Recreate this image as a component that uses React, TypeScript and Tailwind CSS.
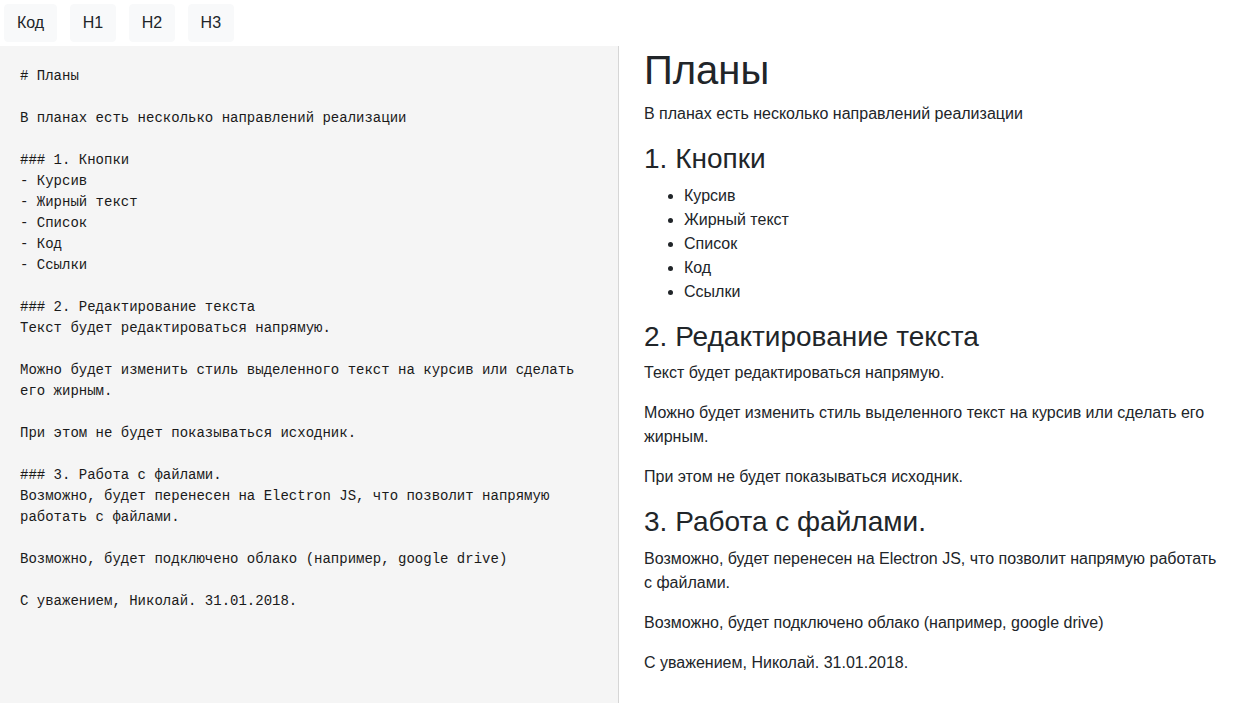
import { useState } from 'react'

const INITIAL_TEXT = `# Планы

В планах есть несколько направлений реализации

### 1. Кнопки
- Курсив
- Жирный текст
- Список
- Код
- Ссылки

### 2. Редактирование текста
Текст будет редактироваться напрямую.

Можно будет изменить стиль выделенного текст на курсив или сделать его жирным.

При этом не будет показываться исходник.

### 3. Работа с файлами.
Возможно, будет перенесен на Electron JS, что позволит напрямую работать с файлами.

Возможно, будет подключено облако (например, google drive)

С уважением, Николай. 31.01.2018.`

type Block =
  | { kind: 'h1' | 'h2' | 'h3' | 'p'; text: string }
  | { kind: 'ul'; items: string[] }

// very small markdown parser, enough for headings, lists and paragraphs
function parse(src: string): Block[] {
  const blocks: Block[] = []
  let para: string[] = []
  let list: string[] = []

  const flush = () => {
    if (para.length) blocks.push({ kind: 'p', text: para.join(' ') })
    if (list.length) blocks.push({ kind: 'ul', items: list })
    para = []
    list = []
  }

  for (const raw of src.split('\n')) {
    const line = raw.trim()
    if (!line) {
      flush()
      continue
    }
    const h = line.match(/^(#{1,3})\s+(.*)$/)
    if (h) {
      flush()
      const kind = (['h1', 'h2', 'h3'] as const)[h[1].length - 1]
      blocks.push({ kind, text: h[2] })
      continue
    }
    if (line.startsWith('- ')) {
      if (para.length) {
        blocks.push({ kind: 'p', text: para.join(' ') })
        para = []
      }
      list.push(line.slice(2))
      continue
    }
    if (list.length) {
      blocks.push({ kind: 'ul', items: list })
      list = []
    }
    para.push(line)
  }
  flush()
  return blocks
}

const TOOLS = [
  { label: 'Код', prefix: '`' },
  { label: 'H1', prefix: '# ' },
  { label: 'H2', prefix: '## ' },
  { label: 'H3', prefix: '### ' },
]

export default function App() {
  const [text, setText] = useState(INITIAL_TEXT)

  const insert = (prefix: string) => setText(prev => prev + '\n\n' + prefix)

  return (
    <div className="flex h-screen flex-col bg-white font-['Liberation_Sans',Arial,sans-serif] text-[#212529]">
      {/* Toolbar */}
      <div className="flex h-[46px] shrink-0 items-start gap-[12.5px] p-1">
        {TOOLS.map(t => (
          <button
            key={t.label}
            onClick={() => insert(t.prefix)}
            className="rounded border border-[#f8f9fa] bg-[#f8f9fa] px-3 py-1.5 text-base leading-6 text-[#212529] hover:bg-[#e2e6ea]"
          >
            {t.label}
          </button>
        ))}
      </div>

      {/* Editor + preview */}
      <div className="flex min-h-0 flex-1">
        <div className="w-[619px] shrink-0 border-r border-[#d6d6d6] bg-[#f5f5f5]">
          <textarea
            value={text}
            onChange={e => setText(e.target.value)}
            spellCheck={false}
            className="block h-full w-full resize-none bg-transparent p-5 font-['Liberation_Mono','Courier_New',monospace] text-[14px] leading-[21px] text-[#1a1a1a] outline-none"
          />
        </div>

        <div className="min-w-0 flex-1 overflow-hidden pl-[25px] pr-[25px]">
          {parse(text).map((b, i) => {
            if (b.kind === 'h1')
              return <h1 key={i} className="mb-2 text-[40px] font-medium leading-[1.2]">{b.text}</h1>
            if (b.kind === 'h2')
              return <h2 key={i} className="mb-2 text-[32px] font-medium leading-[1.2]">{b.text}</h2>
            if (b.kind === 'h3')
              return <h3 key={i} className="mb-2 text-[28px] font-medium leading-[1.2]">{b.text}</h3>
            if (b.kind === 'ul')
              return (
                <ul key={i} className="mb-4 list-disc pl-10 text-base leading-6">
                  {b.items.map((it, j) => <li key={j}>{it}</li>)}
                </ul>
              )
            return <p key={i} className="mb-4 text-base leading-6">{b.text}</p>
          })}
        </div>
      </div>
    </div>
  )
}
